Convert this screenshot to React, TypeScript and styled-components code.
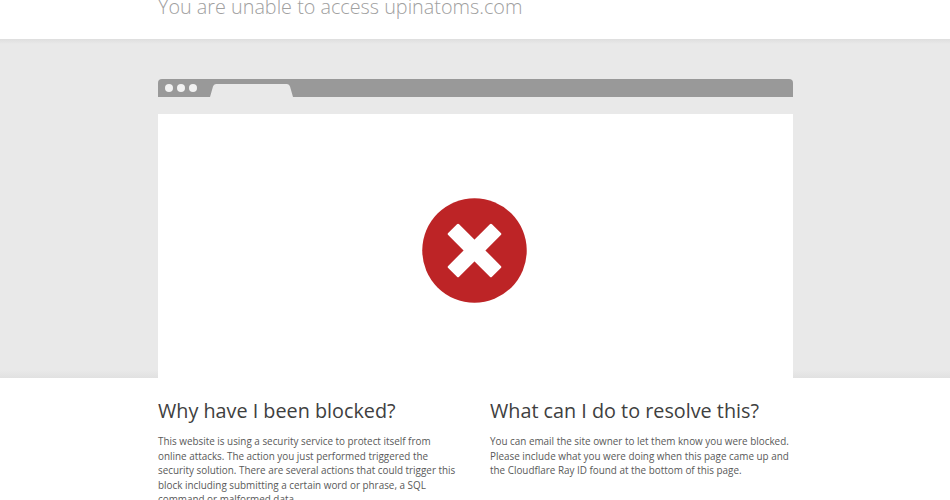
import React from "react";
import styled, { createGlobalStyle } from "styled-components";

const Global = createGlobalStyle`
  html, body { margin: 0; padding: 0; height: 500px; overflow: hidden; background: #fff; }
  body { font-family: "Open Sans", "Liberation Sans", sans-serif; }
`;
const Page = styled.div`
  width: 950px;
  height: 500px;
  overflow: hidden;
`;
const Header = styled.header`
  height: 39px;
  padding-left: 158px;
  display: flex;
  align-items: flex-end;
  background: #fff;
`;
const Title = styled.h1`
  margin: 0 0 19px;
  font-size: 19.8px;
  line-height: 26px;
  font-weight: 300;
  color: #a0a0a0;
  white-space: nowrap;
`;
const Band = styled.section`
  height: 339px;
  box-sizing: border-box;
  padding: 40px 157px 0 158px;
  background:
    linear-gradient(#dedede, #e9e9e9 5px, #e9e9e9 calc(100% - 8px), #e1e1e1);
`;
const BrowserBar = styled.div`
  height: 18px;
  display: flex;
  align-items: center;
  gap: 4px;
  padding: 0 0 0 7px;
  background: #999;
  border-radius: 4px 4px 0 0;
  position: relative;
`;
const Dot = styled.span`
  width: 8px;
  height: 8px;
  border-radius: 50%;
  background: #f2f2f2;
`;
const Tab = styled.svg`
  position: absolute;
  left: 52px;
  bottom: 0;
  display: block;
`;
const TabShade = styled.div`
  height: 17px;
`;
const Panel = styled.div`
  height: 264px;
  box-sizing: border-box;
  padding: 8px 2px 0 0;
  background: #fff;
  display: flex;
  align-items: center;
  justify-content: center;
`;
const Columns = styled.section`
  display: grid;
  grid-template-columns: 300px 303px;
  column-gap: 32px;
  padding: 20px 0 0 158px;
`;
const Heading = styled.h2`
  margin: 0 0 11px;
  font-size: 19.8px;
  line-height: 25px;
  font-weight: 400;
  color: #404040;
  white-space: nowrap;
`;
const Body = styled.p`
  margin: 0;
  font-size: 9.9px;
  line-height: 14.6px;
  color: #595959;
`;

export default function App() {
  return (
    <Page>
      <Global />
      <Header>
        <Title>You are unable to access upinatoms.com</Title>
      </Header>
      <Band>
        <BrowserBar>
          <Dot />
          <Dot />
          <Dot />
          <Tab width="83" height="13" viewBox="0 0 83 13">
            <path d="M0 13 L3 2.5 Q3.6 0 6 0 H77 Q79.4 0 80 2.5 L83 13 Z" fill="#e9e9e9" />
          </Tab>
        </BrowserBar>
        <TabShade />
        <Panel>
          <svg width="105" height="105" viewBox="0 0 105 105">
            <circle cx="52.5" cy="52.5" r="52.25" fill="#bd2426" />
            <g fill="#fff" transform="rotate(45 52.5 52.5)">
              <rect x="21.5" y="44.75" width="62" height="15.5" rx="1.5" />
              <rect x="44.75" y="21.5" width="15.5" height="62" rx="1.5" />
            </g>
          </svg>
        </Panel>
      </Band>
      <Columns>
        <div>
          <Heading>Why have I been blocked?</Heading>
          <Body>
            This website is using a security service to protect itself from online attacks. The
            action you just performed triggered the security solution. There are several actions
            that could trigger this block including submitting a certain word or phrase, a SQL
            command or malformed data.
          </Body>
        </div>
        <div>
          <Heading>What can I do to resolve this?</Heading>
          <Body>
            You can email the site owner to let them know you were blocked. Please include what you
            were doing when this page came up and the Cloudflare Ray ID found at the bottom of this
            page.
          </Body>
        </div>
      </Columns>
    </Page>
  );
}
